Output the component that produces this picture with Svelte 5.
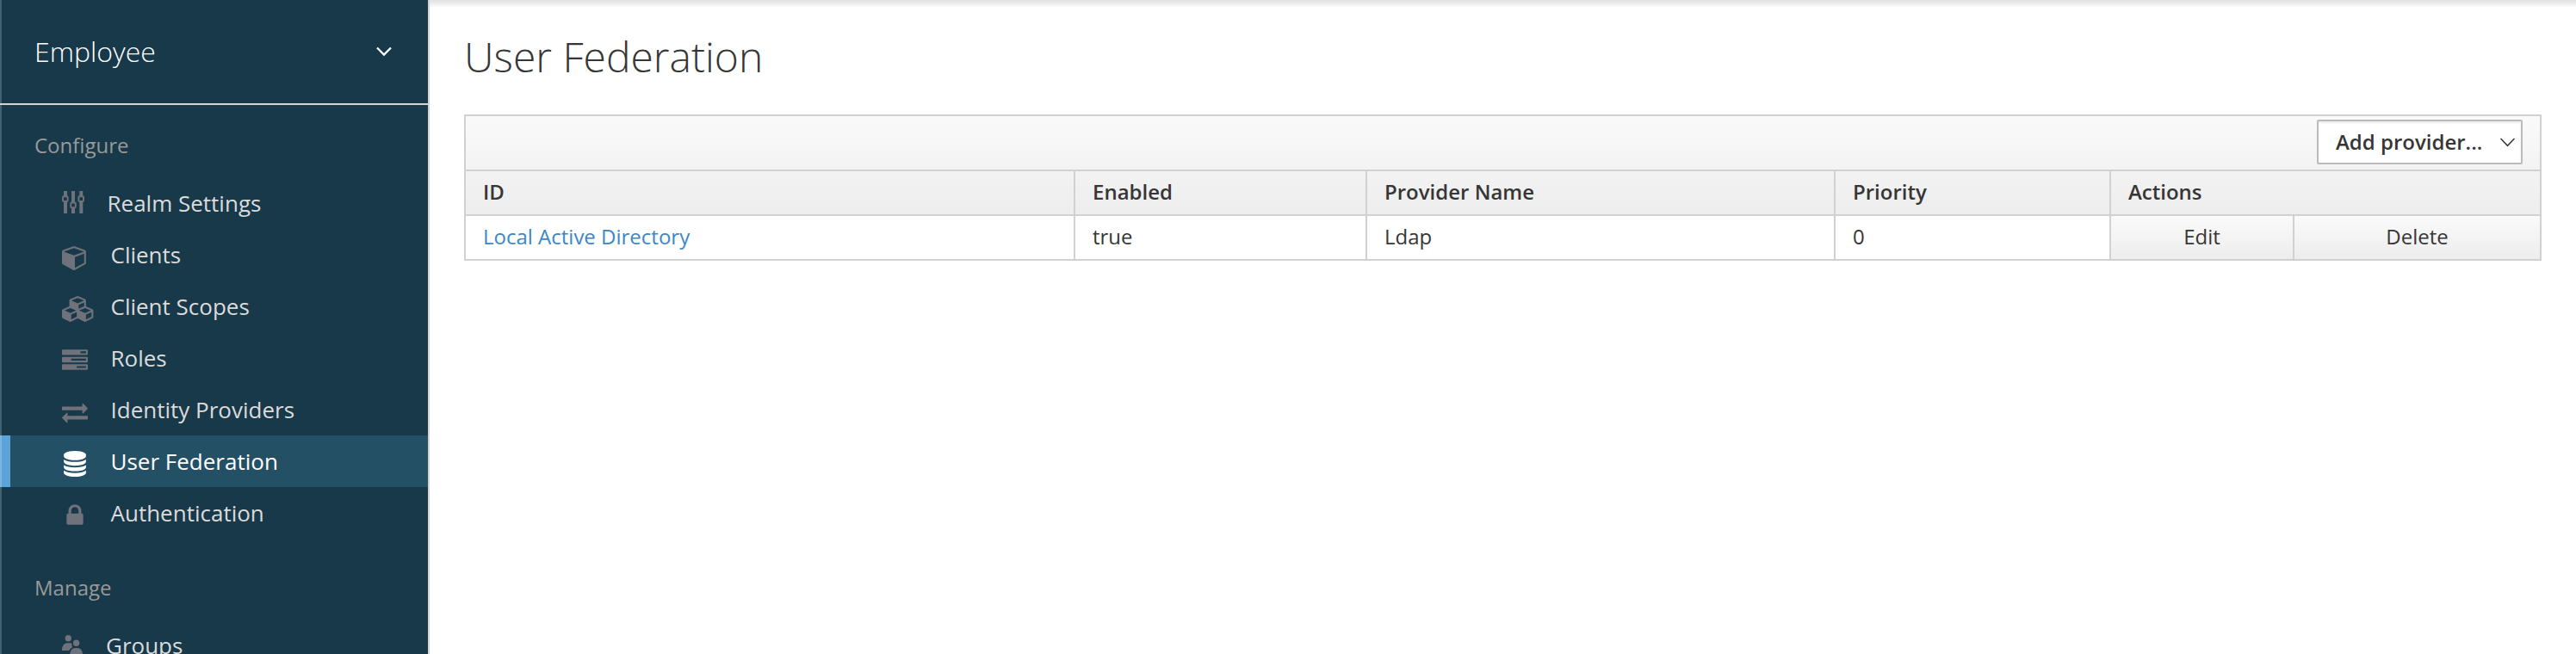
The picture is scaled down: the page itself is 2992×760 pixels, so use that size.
<script>
  const configure = [
    { label: 'Realm Settings', icon: 'sliders', gap: 124.5 },
    { label: 'Clients', icon: 'cube', gap: 128.5 },
    { label: 'Client Scopes', icon: 'cubes', gap: 128.5 },
    { label: 'Roles', icon: 'tasks', gap: 128.5 },
    { label: 'Identity Providers', icon: 'exchange', gap: 128.5 },
    { label: 'User Federation', icon: 'database', gap: 128.5, active: true },
    { label: 'Authentication', icon: 'lock', gap: 128.5 }
  ];
  const manage = [{ label: 'Groups', icon: 'users', gap: 123 }];

  const glyphs = {
    cube: 'M896 1629l640-349v-636l-640 233v752zm-64-865l698-254-698-254-698 254zm832-252v768q0 35-18 65t-49 47l-704 384q-28 16-61 16t-61-16l-704-384q-31-17-49-47t-18-65v-768q0-40 23-73t61-47l704-256q22-8 44-8t44 8l704 256q38 14 61 47t23 73z',
    cubes: 'M640 1632l384-192v-314l-384 164v342zm-64-454l404-173-404-173-404 173zm1088 454l384-192v-314l-384 164v342zm-64-454l404-173-404-173-404 173zm-448-293l384-165v-266l-384 164v267zm-64-379l441-189-441-189-441 189zm1088 518v416q0 36-19 67t-52 47l-448 224q-25 14-57 14t-57-14l-448-224q-5-2-7-4-2 2-7 4l-448 224q-25 14-57 14t-57-14l-448-224q-33-16-52-47t-19-67v-416q0-38 21.5-70t56.5-48l434-186v-400q0-38 21.5-70t56.5-48l448-192q23-10 50-10t50 10l448 192q35 16 56.5 48t21.5 70v400l434 186q36 16 57 48t21 70z',
    tasks: 'M1024 1408h640v-128h-640v128zm-384-512h1024v-128h-1024v128zm640-512h384v-128h-384v128zm512 832v256q0 26-19 45t-45 19h-1664q-26 0-45-19t-19-45v-256q0-26 19-45t45-19h1664q26 0 45 19t19 45zm0-512v256q0 26-19 45t-45 19h-1664q-26 0-45-19t-19-45v-256q0-26 19-45t45-19h1664q26 0 45 19t19 45zm0-512v256q0 26-19 45t-45 19h-1664q-26 0-45-19t-19-45v-256q0-26 19-45t45-19h1664q26 0 45 19t19 45z',
    exchange: 'M1792 1184v192q0 13-9.5 22.5t-22.5 9.5h-1376v192q0 13-9.5 22.5t-22.5 9.5q-12 0-24-10l-319-320q-9-9-9-22 0-14 9-23l320-320q9-9 23-9 13 0 22.5 9.5t9.5 22.5v192h1376q13 0 22.5 9.5t9.5 22.5zm0-544q0 14-9 23l-320 320q-9 9-23 9-13 0-22.5-9.5t-9.5-22.5v-192h-1376q-13 0-22.5-9.5t-9.5-22.5v-192q0-13 9.5-22.5t22.5-9.5h1376v-192q0-14 9-23t23-9q12 0 24 10l319 319q9 9 9 23z',
    database: 'M896 768q237 0 443-43t325-127v170q0 69-103 128t-280 93.5-385 34.5-385-34.5-280-93.5-103-128v-170q119 84 325 127t443 43zm0 768q237 0 443-43t325-127v170q0 69-103 128t-280 93.5-385 34.5-385-34.5-280-93.5-103-128v-170q119 84 325 127t443 43zm0-384q237 0 443-43t325-127v170q0 69-103 128t-280 93.5-385 34.5-385-34.5-280-93.5-103-128v-170q119 84 325 127t443 43zm0-1152q208 0 385 34.5t280 93.5 103 128v128q0 69-103 128t-280 93.5-385 34.5-385-34.5-280-93.5-103-128v-128q0-69 103-128t280-93.5 385-34.5z',
    lock: 'M640 768h512v-192q0-106-75-181t-181-75-181 75-75 181v192zm832 96v576q0 40-28 68t-68 28h-960q-40 0-68-28t-28-68v-576q0-40 28-68t68-28h32v-192q0-184 132-316t316-132 316 132 132 316v192h32q40 0 68 28t28 68z'
  };
</script>

{#snippet item(entry)}
  <li class="item" class:active={entry.active}>
    <span class="slot" style="width: {entry.gap - 72}px">
      <svg class="icon" width="40" height="60" viewBox="0 0 40 60">
        {#if entry.icon === 'sliders'}
          <path d="M2 16h4v26h-4zM11 16h4v26h-4zM20.3 16h4v26h-4z" />
          <g class="knob">
            <rect x="1" y="22.3" width="5.6" height="5.6" rx="1" />
            <rect x="10.2" y="29.5" width="5.6" height="5.6" rx="1" />
            <rect x="19.4" y="22.3" width="5.6" height="5.6" rx="1" />
          </g>
        {:else if entry.icon === 'users'}
          <circle cx="7.3" cy="21.7" r="3.7" />
          <circle cx="16.6" cy="27.2" r="3.7" />
          <path d="M0 36v-2q1-6.800 6-6.800h3.500q1.500 0 2 1.300-.2 3 .6 3.700-2.300 1.300-4 3.800z" />
          <path d="M9.300 42v-2q1-7 6-7h3q4.800 0 5.700 7v2z" />
        {:else}
          <path transform="translate(0 18) scale(0.016741)" d={glyphs[entry.icon]} />
        {/if}
      </svg>
    </span>
    <span class="label">{entry.label}</span>
  </li>
{/snippet}

<div class="page">
  <nav class="sidebar">
    <div class="realm">
      <span>Employee</span>
      <svg width="20" height="14" viewBox="0 0 20 14">
        <path d="M2 2.500l8 8 8-8" fill="none" stroke="#fff" stroke-width="2.300" />
      </svg>
    </div>
    <h2>Configure</h2>
    <ul>
      {#each configure as entry}{@render item(entry)}{/each}
    </ul>
    <h2 class="second">Manage</h2>
    <ul>
      {#each manage as entry}{@render item(entry)}{/each}
    </ul>
  </nav>

  <main>
    <h1>User Federation</h1>
    <table>
      <colgroup>
        <col class="c-id" /><col class="c-enabled" /><col class="c-provider" /><col class="c-priority" />
        <col class="c-edit" /><col class="c-delete" />
      </colgroup>
      <thead>
        <tr class="tools">
          <th colspan="6">
            <div class="bar">
              <button class="select">
                <span>Add provider...</span>
                <svg width="18" height="12" viewBox="0 0 18 12">
                  <path d="M1.500 2l8 8.300 8-8.300" fill="none" stroke="#363636" stroke-width="1.500" />
                </svg>
              </button>
            </div>
          </th>
        </tr>
        <tr class="heads">
          <th>ID</th><th>Enabled</th><th>Provider Name</th><th>Priority</th><th colspan="2">Actions</th>
        </tr>
      </thead>
      <tbody>
        <tr>
          <td><span class="link">Local Active Directory</span></td>
          <td>true</td>
          <td>Ldap</td>
          <td>0</td>
          <td class="action">Edit</td>
          <td class="action">Delete</td>
        </tr>
      </tbody>
    </table>
  </main>
</div>

<style>
  :global(body) {
    background: #fff;
    overflow: hidden;
  }
  .page {
    display: flex;
    width: 2992px;
    height: 760px;
    overflow: hidden;
    font-family: 'Open Sans', sans-serif;
    font-size: 24px;
    color: #363636;
  }
  .sidebar {
    flex: none;
    box-sizing: border-box;
    width: 499px;
    height: 760px;
    overflow: hidden;
    border-right: 2px solid #d1d1d1;
    background: #17394a;
    box-shadow: inset 2px 0 0 #45616e;
  }
  .realm {
    display: flex;
    align-items: center;
    justify-content: space-between;
    box-sizing: border-box;
    height: 122px;
    padding: 0 41px 0 40px;
    border-bottom: 2px solid #d1d5d7;
    color: #fff;
    font-size: 32px;
    font-weight: 300;
  }
  .realm span {
    padding-bottom: 2px;
  }
  h2 {
    margin: 0;
    height: 84px;
    padding-left: 40px;
    line-height: 94px;
    color: #999;
    font-size: 24px;
    font-weight: 400;
  }
  h2.second {
    height: 94px;
    line-height: 114px;
  }
  ul {
    margin: 0;
    padding: 0;
    list-style: none;
  }
  .item {
    display: flex;
    height: 60px;
    padding-left: 72px;
    line-height: 60px;
    color: #dbdbdb;
    font-size: 26px;
  }
  .item.active {
    background: #245065;
    box-shadow: inset 2px 0 0 #7cb5e0, inset 12px 0 0 #5ba3d9;
    color: #fff;
  }
  .slot {
    flex: none;
    display: block;
  }
  .icon {
    display: block;
    fill: #6f727a;
  }
  .knob rect {
    fill: #17394a;
    stroke: #6f727a;
    stroke-width: 1.900;
  }
  .active .icon {
    fill: #fff;
  }
  main {
    flex: 1;
    padding: 0 40px;
    background: linear-gradient(#e2e2e2, #e9e9e9 3px, #fff 9px);
  }
  h1 {
    margin: 0;
    height: 133px;
    line-height: 131px;
    font-size: 48px;
    font-weight: 300;
  }
  table {
    width: 2413px;
    table-layout: fixed;
    border-collapse: collapse;
    border: 2px solid #d1d1d1;
  }
  .c-id { width: 708px; }
  .c-enabled { width: 339px; }
  .c-provider { width: 544px; }
  .c-priority { width: 320px; }
  .c-edit { width: 213px; }
  thead {
    background: linear-gradient(#fafafa, #ededed);
  }
  th,
  td {
    box-sizing: border-box;
    height: 52px;
    padding: 0 20px 3px;
    border: 2px solid #d1d1d1;
    line-height: 47px;
    text-align: left;
    font-weight: 400;
  }
  .heads th {
    font-weight: 600;
  }
  .tools th {
    height: 64px;
    padding: 0 20px 2px;
  }
  .bar {
    display: flex;
    justify-content: flex-end;
    align-items: center;
    height: 58px;
  }
  .select {
    display: flex;
    align-items: center;
    justify-content: space-between;
    box-sizing: border-box;
    width: 239px;
    height: 52px;
    padding: 0 7px 0 20px;
    border: 2px solid #bbb;
    border-radius: 2px;
    background: #fff;
    box-shadow: inset 0 2px 2px rgba(0, 0, 0, 0.075);
    color: #363636;
    font: 600 24px/48px 'Open Sans', sans-serif;
  }
  .link {
    color: #3b87c8;
  }
  td.action {
    background: linear-gradient(#fafafa, #ededed);
    text-align: center;
  }
</style>
